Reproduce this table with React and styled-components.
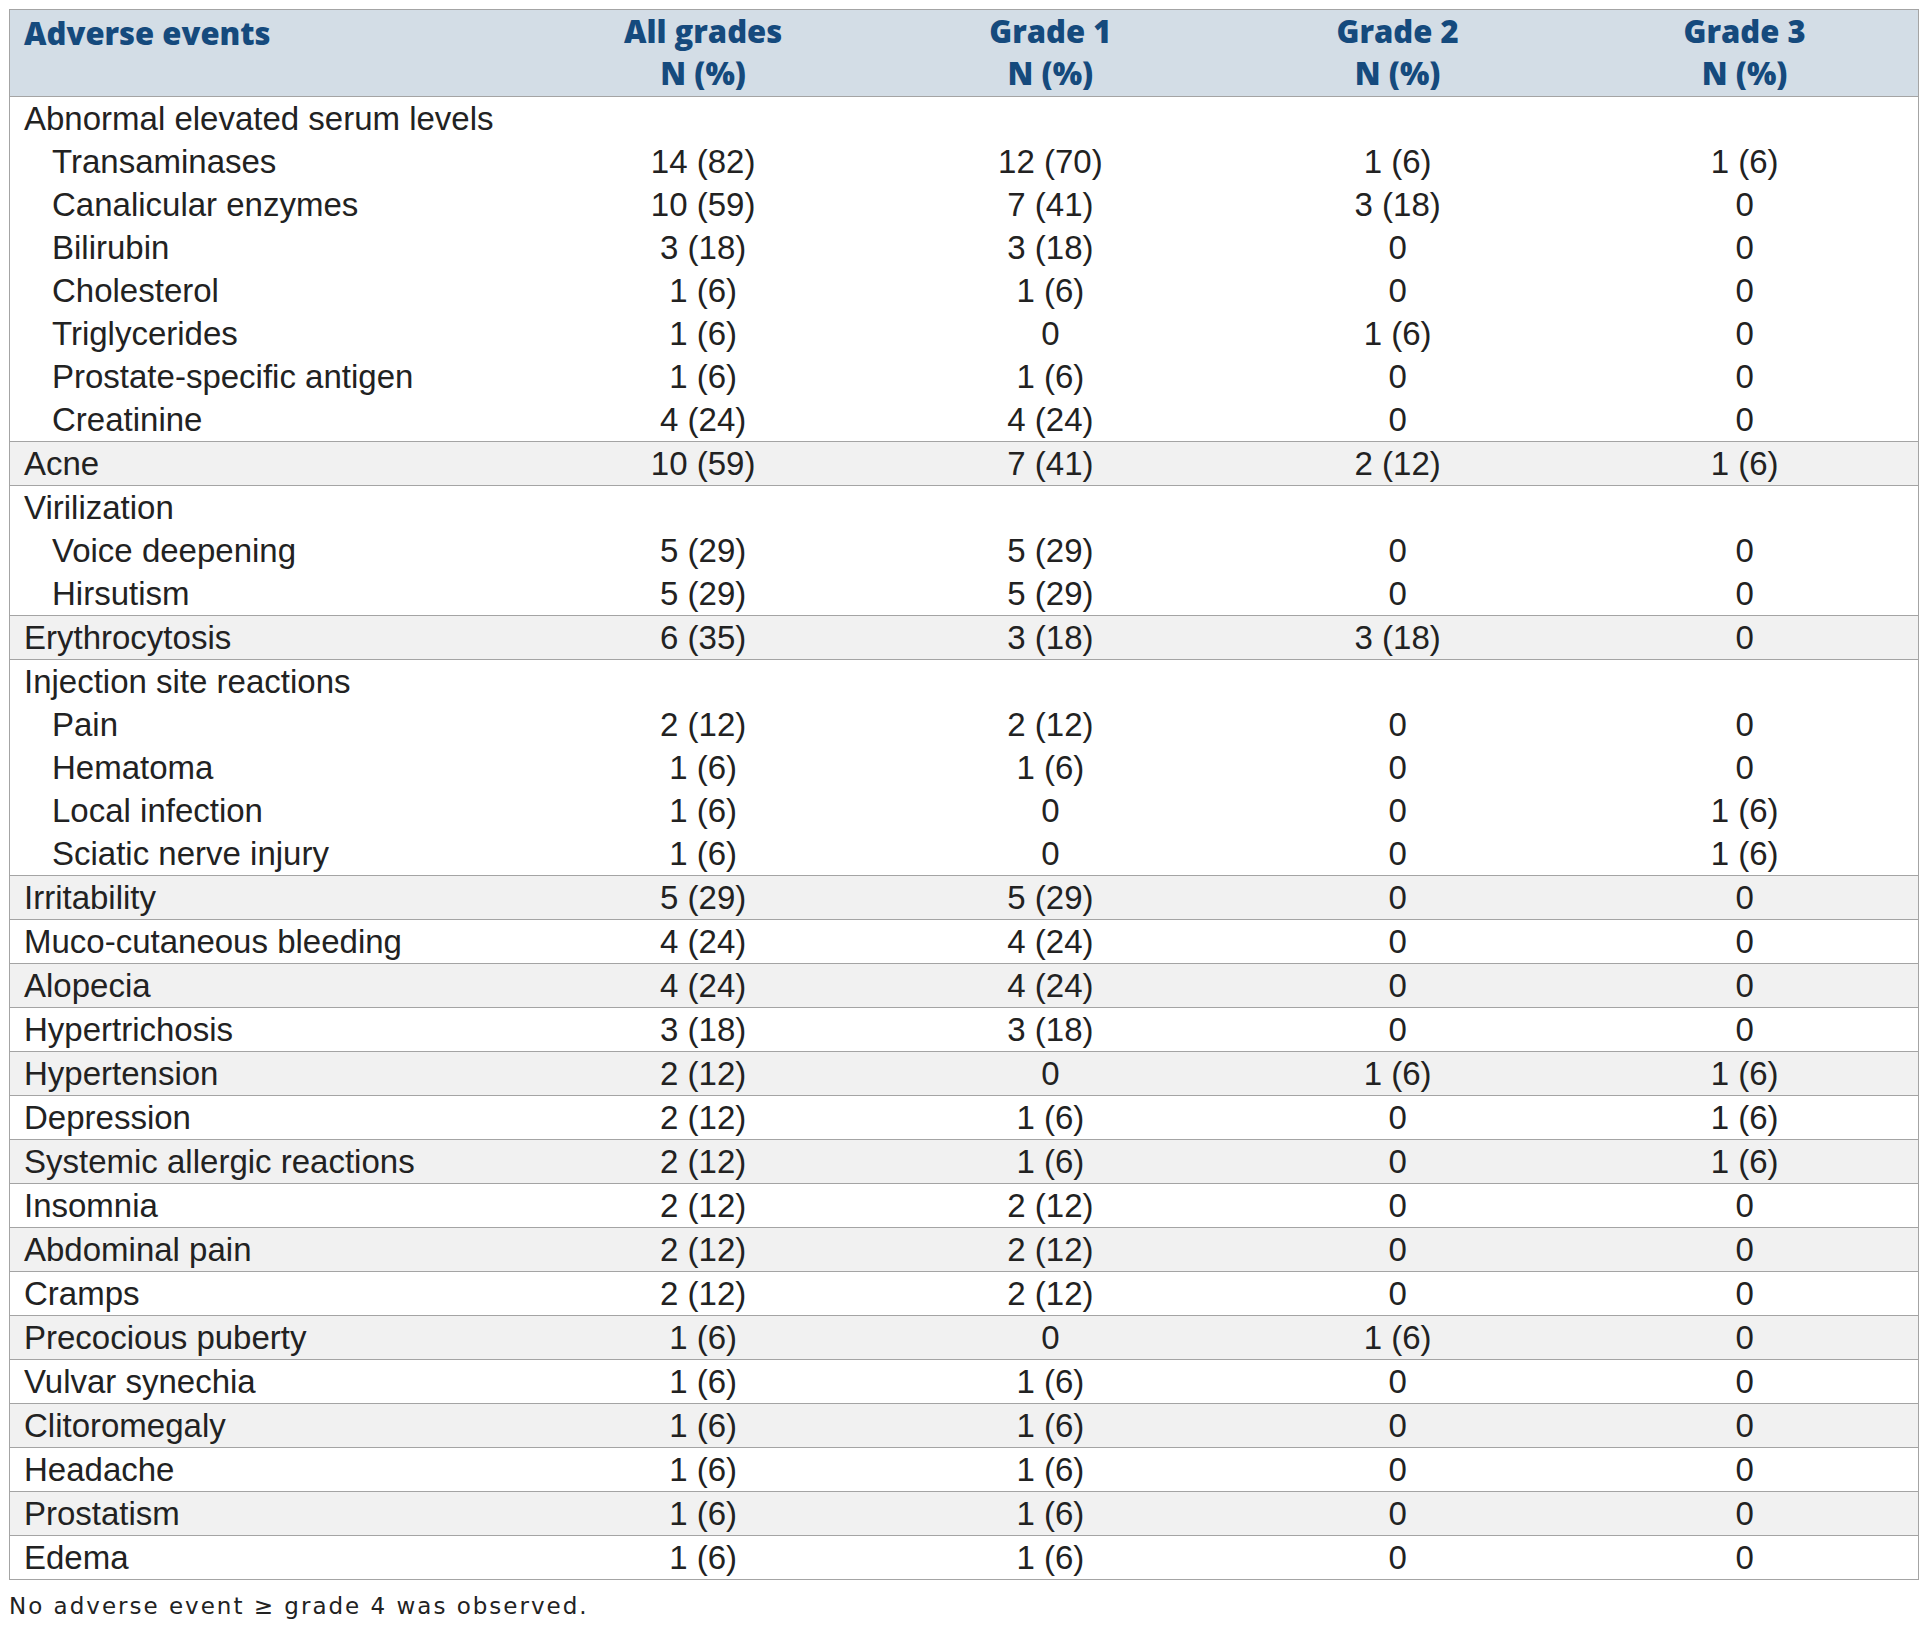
import React from 'react';
import styled, { createGlobalStyle } from 'styled-components';

const GlobalStyle = createGlobalStyle`
  html, body {
    margin: 0;
    padding: 0;
    background: #ffffff;
  }
`;

const groups = [
  {
    label: 'Abnormal elevated serum levels',
    subs: [
      ['Transaminases', '14 (82)', '12 (70)', '1 (6)', '1 (6)'],
      ['Canalicular enzymes', '10 (59)', '7 (41)', '3 (18)', '0'],
      ['Bilirubin', '3 (18)', '3 (18)', '0', '0'],
      ['Cholesterol', '1 (6)', '1 (6)', '0', '0'],
      ['Triglycerides', '1 (6)', '0', '1 (6)', '0'],
      ['Prostate-specific antigen', '1 (6)', '1 (6)', '0', '0'],
      ['Creatinine', '4 (24)', '4 (24)', '0', '0'],
    ],
  },
  { label: 'Acne', values: ['10 (59)', '7 (41)', '2 (12)', '1 (6)'] },
  {
    label: 'Virilization',
    subs: [
      ['Voice deepening', '5 (29)', '5 (29)', '0', '0'],
      ['Hirsutism', '5 (29)', '5 (29)', '0', '0'],
    ],
  },
  { label: 'Erythrocytosis', values: ['6 (35)', '3 (18)', '3 (18)', '0'] },
  {
    label: 'Injection site reactions',
    subs: [
      ['Pain', '2 (12)', '2 (12)', '0', '0'],
      ['Hematoma', '1 (6)', '1 (6)', '0', '0'],
      ['Local infection', '1 (6)', '0', '0', '1 (6)'],
      ['Sciatic nerve injury', '1 (6)', '0', '0', '1 (6)'],
    ],
  },
  { label: 'Irritability', values: ['5 (29)', '5 (29)', '0', '0'] },
  { label: 'Muco-cutaneous bleeding', values: ['4 (24)', '4 (24)', '0', '0'] },
  { label: 'Alopecia', values: ['4 (24)', '4 (24)', '0', '0'] },
  { label: 'Hypertrichosis', values: ['3 (18)', '3 (18)', '0', '0'] },
  { label: 'Hypertension', values: ['2 (12)', '0', '1 (6)', '1 (6)'] },
  { label: 'Depression', values: ['2 (12)', '1 (6)', '0', '1 (6)'] },
  { label: 'Systemic allergic reactions', values: ['2 (12)', '1 (6)', '0', '1 (6)'] },
  { label: 'Insomnia', values: ['2 (12)', '2 (12)', '0', '0'] },
  { label: 'Abdominal pain', values: ['2 (12)', '2 (12)', '0', '0'] },
  { label: 'Cramps', values: ['2 (12)', '2 (12)', '0', '0'] },
  { label: 'Precocious puberty', values: ['1 (6)', '0', '1 (6)', '0'] },
  { label: 'Vulvar synechia', values: ['1 (6)', '1 (6)', '0', '0'] },
  { label: 'Clitoromegaly', values: ['1 (6)', '1 (6)', '0', '0'] },
  { label: 'Headache', values: ['1 (6)', '1 (6)', '0', '0'] },
  { label: 'Prostatism', values: ['1 (6)', '1 (6)', '0', '0'] },
  { label: 'Edema', values: ['1 (6)', '1 (6)', '0', '0'] },
];

const headings = ['All grades', 'Grade 1', 'Grade 2', 'Grade 3'];

function App() {
  return (
    <Page>
      <GlobalStyle />
      <Table>
        <colgroup>
          <col style={{ width: '520px' }} />
          <col />
          <col />
          <col />
          <col />
        </colgroup>
        <thead>
          <tr>
            <HeadCell $first>Adverse events</HeadCell>
            {headings.map(h => (
              <HeadCell key={h}>
                {h}
                <br />
                N (%)
              </HeadCell>
            ))}
          </tr>
        </thead>
        {groups.map((g, i) => (
          <Group key={g.label} $shaded={i % 2 === 1}>
            <tr>
              <LabelCell>{g.label}</LabelCell>
              {(g.values || ['', '', '', '']).map((v, j) => (
                <ValueCell key={j}>{v}</ValueCell>
              ))}
            </tr>
            {g.subs && g.subs.map(([name, ...vals]) => (
              <tr key={name}>
                <LabelCell $indent>{name}</LabelCell>
                {vals.map((v, j) => (
                  <ValueCell key={j}>{v}</ValueCell>
                ))}
              </tr>
            ))}
          </Group>
        ))}
      </Table>
      <Footnote>No adverse event ≥ grade 4 was observed.</Footnote>
    </Page>
  );
}

export default App;

const Page = styled.div`
  padding: 9px 9px 0 9px;
  width: 1910px;
`;

const Table = styled.table`
  width: 1910px;
  table-layout: fixed;
  border-collapse: collapse;
  border: 1px solid #a4a4a4;
`;

const HeadCell = styled.th`
  background: #d3dde6;
  color: #154a7d;
  font-family: "Open Sans", "Liberation Sans", sans-serif;
  font-weight: 800;
  font-size: 31px;
  line-height: 42px;
  text-align: ${p => (p.$first ? 'left' : 'center')};
  vertical-align: top;
  padding: ${p => (p.$first ? '2px 14px 0 14px' : '0 14px 2px 14px')};
  border-bottom: 1px solid #a4a4a4;
`;

const Group = styled.tbody`
  background: ${p => (p.$shaded ? '#f1f1f1' : '#ffffff')};
  border-bottom: 1px solid #a4a4a4;
`;

const LabelCell = styled.td`
  font-family: "Liberation Sans", Arial, sans-serif;
  font-size: 33px;
  line-height: 42px;
  height: 43px;
  color: #222222;
  padding: 0 0 0 ${p => (p.$indent ? '42px' : '14px')};
  white-space: nowrap;
`;

const ValueCell = styled.td`
  font-family: "Liberation Sans", Arial, sans-serif;
  font-size: 33px;
  line-height: 42px;
  height: 43px;
  color: #222222;
  padding: 0;
  text-align: center;
  white-space: nowrap;
`;

const Footnote = styled.p`
  margin: 11px 0 0 0;
  font-family: "DejaVu Sans", "Open Sans", sans-serif;
  font-size: 23px;
  letter-spacing: 2px;
  line-height: 30px;
  color: #222222;
`;
